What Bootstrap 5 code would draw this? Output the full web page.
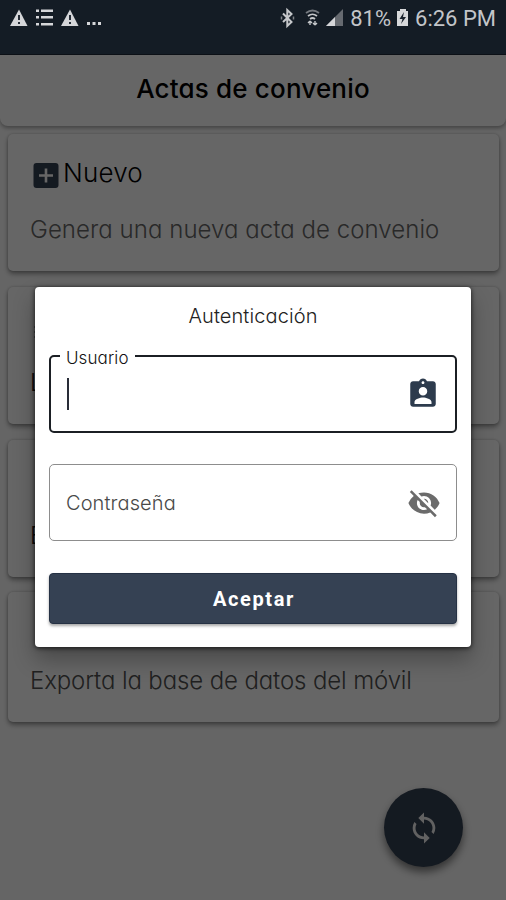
<!DOCTYPE html>
<html lang="es">
<head>
<meta charset="utf-8">
<meta name="viewport" content="width=device-width, initial-scale=1">
<title>Actas de convenio</title>
<link href="https://cdn.jsdelivr.net/npm/bootstrap@5.3.0/dist/css/bootstrap.min.css" rel="stylesheet">
<style>
  body { font-family: Inter, "Open Sans", sans-serif; font-feature-settings: "cv11"; background: #fdfdfd; width: 506px; height: 900px; overflow: hidden; }
  .status { height: 55px; background: #141c25; color: #c3c5c9; font-family: Roboto, sans-serif; font-size: 22px; line-height: 38px; z-index: 1060; border-bottom: 1px solid #0c1016; padding: 0 10px; }
  .status svg { display: block; }
  .appbar { height: 71px; background: #fff; border-radius: 0 0 8px 8px; box-shadow: 0 2px 4px rgba(0,0,0,.35); padding-top: 18px; }
  .appbar h1 { font-size: 26px; line-height: 31px; font-weight: 500; color: #000; letter-spacing: .17px; }
  .tiles { padding: 8px 7px 0 8px; gap: 16px; }
  .tile { height: 137px; border: 0; border-radius: 5px; box-shadow: 0 3px 5px rgba(0,0,0,.38), 0 0 3px rgba(0,0,0,.2); padding: 24px 22px 0; }
  .tile-last { height: 130px; margin-top: -1px; padding-top: 17px; }
  .tile-title { height: 32px; font-size: 26px; font-weight: 300; color: #000; }
  .tile-title span { line-height: 30px; margin-top: -2px; letter-spacing: .2px; }
  .tile-text { margin-top: 24px; font-size: 24px; line-height: 31px; font-weight: 300; color: #666; white-space: nowrap; letter-spacing: .05px; }
  .tile-dark { color: #222; }
  .tile-last .tile-text { letter-spacing: -.12px; color: #505050; }
  .fab { right: 43px; bottom: 33px; width: 79px; height: 79px; background: #344153; box-shadow: 0 5px 8px rgba(0,0,0,.5); }
  .scrim { background: rgba(0,0,0,.6); z-index: 1040; }
  .dialog { top: 287px; left: 35px; width: 436px; height: 360px; z-index: 1050; background: #fff; border-radius: 4px; padding: 16px 14px 0; box-shadow: 0 12px 22px rgba(0,0,0,.3), 0 1px 5px rgba(0,0,0,.75); }
  .dialog h2 { font-size: 20px; line-height: 26px; font-weight: 300; color: #222; letter-spacing: .1px; }
  .field { width: 408px; border-radius: 5px; padding: 0 15px 0 16px; }
  .field-active { height: 78px; border: 2px solid #1b1f24; margin-top: 26px; }
  .field-label { top: -9px; left: 9px; font-size: 17px; line-height: 20px; font-weight: 300; padding: 0 6px; color: #111; background: #fff; letter-spacing: .1px; }
  .caret { width: 2px; height: 32px; background: #292d38; }
  .field-idle { height: 77px; border: 1px solid #8d8d8d; margin-top: 31px; font-size: 20px; font-weight: 300; color: #494949; }
  .t-pass { letter-spacing: .1px; padding-top: 1px; }
  .accept { width: 408px; height: 51px; margin-top: 32px; background: #354153; color: #fff; font: 700 20px Roboto, sans-serif; letter-spacing: 1.6px; border-radius: 4px; box-shadow: 0 2px 3px rgba(0,0,0,.35); border: 1px solid #253144; }
  .accept span { display: block; padding: 1px 0 0 2px; }
  .accept:hover { background: #2d394a; color: #fff; }
</style>
<script src="https://cdn.jsdelivr.net/npm/bootstrap@5.3.0/dist/js/bootstrap.bundle.min.js"></script>
</head>
<body class="position-relative">
  <div class="status position-relative d-flex justify-content-between align-items-start">
    <div class="d-flex">
      <svg width="95" height="36" fill="#d5d6d9">
        <path d="M9 9.500 17.500 26H0Z"/><path d="M60 9.500 68.500 26H51Z"/>
        <path d="M9 15v5M9 22v2M60 15v5M60 22v2" stroke="#242b35" stroke-width="2"/>
        <path d="M26 9.500h3v2.500h-3zM26 16h3v2.500h-3zM26 23h3v2.500h-3zM31 9.500h12v2.500H31zM31 16h12v2.500H31zM31 23h12v2.500H31zM77 22h3v3h-3zM82.500 22h3v3h-3zM88 22h3v3h-3z"/>
      </svg>
    </div>
    <div class="d-flex">
      <svg width="70" height="36" fill="none" stroke="#c5c7ca">
        <path d="m3 13.500 8.500 8.500-4.200 4V10l4.200 4L3 22" stroke-width="2"/>
        <path d="M1.500 16.500v3M13.500 16.500v3" stroke-width="1.500" opacity=".6"/>
        <path d="M26 13q6.500-5 13 0" stroke-width="1.800" opacity=".55"/><path d="M28 16q4.500-3.500 9 0M30 19q2.500-2 5 0" stroke-width="1.700"/>
        <path d="M30 25v-4m0 0-2 2m2-2 2 2M35 21v4m0 0-2-2m2 2 2-2" stroke-width="1.400"/>
        <path d="M46 26h17V9Z" fill="#666a70" stroke="none"/><path d="M46 26h9v-9Z" fill="#d5d6d9" stroke="none"/>
      </svg>
      <span>81%</span>
      <svg width="24" height="36"><path d="M6 11h3V9h6v2h2v15H6Z" fill="#d7d8da"/><path d="m13 12-4.500 7h3l-1.500 5 5-7h-3Z" fill="#1a222c"/></svg>
      <span>6:26 PM</span>
    </div>
  </div>

  <header class="appbar text-center"><h1 class="m-0">Actas de convenio</h1></header>

  <main class="tiles d-flex flex-column">
    <section class="tile card">
      <div class="tile-title d-flex align-items-center">
        <svg width="33" height="34" viewBox="0 0 33 34"><rect x="3.500" y="6" width="25" height="25" rx="3" fill="#344153"/><path d="M16 11.500v14M9 18.500h14" stroke="#fff" stroke-width="2.600"/></svg>
        <span>Nuevo</span>
      </div>
      <div class="tile-text">Genera una nueva acta de convenio</div>
    </section>
    <section class="tile card">
      <div class="tile-title"><svg class="d-block" width="30" height="34" opacity=".4"><path d="M4 16h3M4 21h3M4 26h3M9 16h18M9 21h18M9 26h18" stroke="#344153" stroke-width="2"/></svg></div>
      <div class="tile-text tile-dark">L</div>
    </section>
    <section class="tile card">
      <div class="tile-title"></div>
      <div class="tile-text tile-dark">E</div>
    </section>
    <section class="tile tile-last card">
      <div class="tile-title"></div>
      <div class="tile-text">Exporta la base de datos del móvil</div>
    </section>
  </main>

  <button class="fab btn rounded-circle position-absolute border-0 p-0 d-flex align-items-center justify-content-center" aria-label="Sincronizar">
    <svg width="34" height="34" viewBox="0 0 24 24" fill="#f2f2f2"><path d="M12 4V1L8 5l4 4V6c3.310 0 6 2.690 6 6 0 1.010-.25 1.970-.7 2.800l1.460 1.460A7.930 7.930 0 0 0 20 12c0-4.420-3.580-8-8-8zm0 14c-3.310 0-6-2.690-6-6 0-1.010.25-1.970.7-2.800L5.240 7.740A7.930 7.930 0 0 0 4 12c0 4.420 3.580 8 8 8v3l4-4-4-4v3z"/></svg>
  </button>

  <div class="scrim position-absolute top-0 start-0 w-100 h-100"></div>

  <div class="dialog position-absolute" role="dialog" aria-label="Autenticación">
    <h2 class="text-center m-0">Autenticación</h2>
    <div class="field field-active position-relative d-flex align-items-center justify-content-between">
      <span class="field-label position-absolute">Usuario</span>
      <div class="caret"></div>
      <svg width="34" height="34" viewBox="0 0 24 24" fill="#2d3b4d"><path d="M19 3h-4.180C14.400 1.840 13.300 1 12 1s-2.400.84-2.820 2H5c-1.100 0-2 .9-2 2v14c0 1.100.9 2 2 2h14c1.100 0 2-.9 2-2V5c0-1.100-.9-2-2-2zm-7 0c.55 0 1 .45 1 1s-.45 1-1 1-1-.45-1-1 .45-1 1-1zm0 4c1.660 0 3 1.340 3 3s-1.340 3-3 3-3-1.340-3-3 1.340-3 3-3zm6 12H6v-1.400c0-2 4-3.100 6-3.100s6 1.100 6 3.100V19z"/></svg>
    </div>
    <div class="field field-idle d-flex align-items-center justify-content-between">
      <span class="t-pass">Contraseña</span>
      <svg width="34" height="34" viewBox="0 0 24 24" fill="#6b6b6b"><path d="M12 7c2.760 0 5 2.240 5 5 0 .65-.13 1.260-.36 1.830l2.920 2.920c1.510-1.260 2.700-2.890 3.430-4.750-1.730-4.390-6-7.500-11-7.500-1.400 0-2.740.25-3.980.7l2.160 2.160C10.740 7.130 11.350 7 12 7zM2 4.270l2.280 2.280.46.46A11.800 11.800 0 0 0 1 12c1.730 4.390 6 7.500 11 7.500 1.550 0 3.030-.3 4.380-.84l.42.42L19.730 22 21 20.730 3.270 3 2 4.270zM7.530 9.800l1.550 1.550c-.05.21-.08.43-.08.65 0 1.660 1.340 3 3 3 .22 0 .44-.03.65-.08l1.550 1.550c-.67.33-1.410.53-2.200.53-2.760 0-5-2.240-5-5 0-.79.2-1.530.53-2.200zm4.310-.78 3.150 3.150.02-.16c0-1.660-1.340-3-3-3l-.17.01z"/></svg>
    </div>
    <button class="accept btn p-0 d-block"><span>Aceptar</span></button>
  </div>
</body>
</html>
